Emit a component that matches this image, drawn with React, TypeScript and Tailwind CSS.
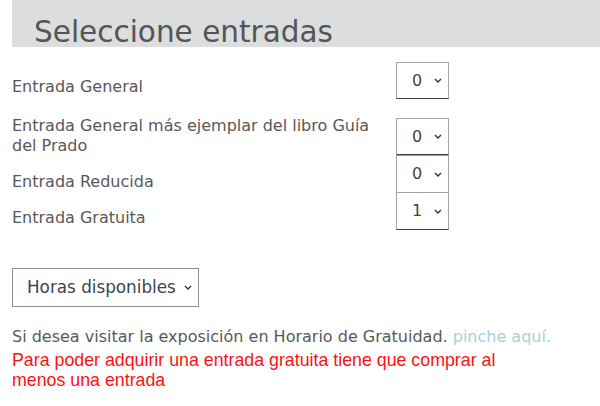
const tickets = [
  { label: "Entrada General", value: "0" },
  { label: "Entrada General más ejemplar del libro Guía del Prado", value: "0" },
  { label: "Entrada Reducida", value: "0" },
  { label: "Entrada Gratuita", value: "1" },
];

function Chevron() {
  return (
    <svg width="8" height="5" viewBox="0 0 8 5" className="text-[#333]">
      <polyline points="1,1 4,4 7,1" fill="none" stroke="currentColor" strokeWidth="1.4" />
    </svg>
  );
}

function QtySelect({ value, className }: { value: string; className?: string }) {
  return (
    <div
      className={
        "flex w-[53px] shrink-0 items-center justify-between border border-[#a3a3a3] border-b-[#3c3c3c] bg-white pl-[15px] pr-[6px] text-[16px] text-[#3d4450] " +
        (className ?? "")
      }
    >
      <span>{value}</span>
      <Chevron />
    </div>
  );
}

export default function App() {
  return (
    <div className="h-[406px] w-[600px] overflow-hidden bg-white font-['DejaVu_Sans',sans-serif] text-[#585858]">
      <div className="ml-3 h-[47px] bg-[#dcddde] pl-[22px] pt-[17px]">
        <h1 className="text-[29.5px] leading-[30px] text-[#555]">Seleccione entradas</h1>
      </div>

      <div className="ml-3 mt-[15px] flex w-[437px] items-start justify-between">
        <p className="pt-[15px] text-[16px] leading-[20px]">{tickets[0].label}</p>
        <QtySelect value={tickets[0].value} className="h-[37px]" />
      </div>

      <div className="ml-3 mt-[19px] w-[437px]">
        <div className="flex items-start justify-between">
          <p className="-mt-[2px] w-[375px] text-[16px] leading-[20px]">{tickets[1].label}</p>
          <QtySelect value={tickets[1].value} className="h-[37px]" />
        </div>
        <div className="flex items-start justify-between">
          <p className="pt-[16px] text-[16px] leading-[20px]">{tickets[2].label}</p>
          <QtySelect value={tickets[2].value} className="-mt-px h-[38px]" />
        </div>
        <div className="flex items-start justify-between">
          <p className="pt-[15px] text-[16px] leading-[20px]">{tickets[3].label}</p>
          <QtySelect value={tickets[3].value} className="-mt-px h-[38px]" />
        </div>
      </div>

      <div className="ml-3 mt-[38px] flex h-[39px] w-[187px] items-center justify-between border border-[#8f8f8f] pl-[14px] pr-[6px] text-[16.8px] text-[#3d4450]">
        <span>Horas disponibles</span>
        <Chevron />
      </div>

      <div className="ml-3 mt-[20px] w-[570px]">
        <p className="text-[16px] leading-[20px]">
          Si desea visitar la exposición en Horario de Gratuidad.{" "}
          <a className="text-[#a3d3d8]">pinche aquí.</a>
        </p>
        <p className="mt-[3px] w-[515px] font-['Liberation_Sans',sans-serif] text-[17.8px] leading-[20px] text-[#ff1111]">
          Para poder adquirir una entrada gratuita tiene que comprar al menos una entrada
        </p>
      </div>
    </div>
  );
}
